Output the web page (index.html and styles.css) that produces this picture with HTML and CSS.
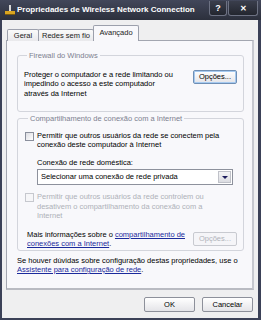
FILE: index.html
```html
<!DOCTYPE html>
<html lang="pt">
<head>
    <meta charset="UTF-8">
    <title>Propriedades de Wireless Network Connection</title>
    <link rel="stylesheet" href="styles.css">
</head>
<body>
    <div class="window">
        <div class="titlebar">
            <svg class="app-icon" width="12" height="10" viewBox="0 0 12 10">
                <rect x="5" y="0" width="2" height="7" fill="#d8d8d8"/>
                <rect x="1" y="6" width="10" height="3" fill="#d9a520"/>
                <rect x="1" y="9" width="10" height="1" fill="#7a5a10"/>
            </svg>
            <span class="title">Propriedades de Wireless Network Connection</span>
            <div class="caption-buttons">
                <button class="cap-btn help">?</button>
                <button class="cap-btn close">✕</button>
            </div>
        </div>

        <div class="client">
            <div class="tabs">
                <div class="tab">Geral</div>
                <div class="tab">Redes sem fio</div>
                <div class="tab active">Avançado</div>
            </div>

            <div class="page">
                <fieldset class="group firewall">
                    <legend>Firewall do Windows</legend>
                    <div class="row">
                        <p class="text">Proteger o computador e a rede limitando ou<br>impedindo o acesso a este computador<br>através da Internet</p>
                        <button class="btn focused">Opções...</button>
                    </div>
                </fieldset>

                <fieldset class="group sharing">
                    <legend>Compartilhamento de conexão com a Internet</legend>
                    <label class="check">
                        <span class="box"></span>
                        <span class="text">Permitir que outros usuários da rede se conectem pela<br>conexão deste computador à Internet</span>
                    </label>

                    <div class="home">
                        <div class="text">Conexão de rede doméstica:</div>
                        <div class="select">
                            <span class="value">Selecionar uma conexão de rede privada</span>
                            <span class="arrow"></span>
                        </div>
                    </div>

                    <label class="check disabled">
                        <span class="box"></span>
                        <span class="text">Permitir que outros usuários da rede controlem ou<br>desativem o compartilhamento da conexão com a<br>Internet</span>
                    </label>

                    <div class="row more">
                        <p class="text">Mais informações sobre o <a href="#">compartilhamento de<br>conexões com a Internet</a>.</p>
                        <button class="btn" disabled>Opções...</button>
                    </div>
                </fieldset>

                <p class="text wizard">Se houver dúvidas sobre configuração destas propriedades, use o<br><a href="#">Assistente para configuração de rede</a>.</p>
            </div>

            <div class="actions">
                <button class="btn wide">OK</button>
                <button class="btn wide">Cancelar</button>
            </div>
        </div>
    </div>
</body>
</html>
```

FILE: styles.css
```css
* {
    box-sizing: border-box;
}

body {
    margin: 0;
    background: #ffffff;
    font-family: 'Liberation Sans', Arial, sans-serif;
    font-size: 7.5px;
    line-height: 9.5px;
    color: #000000;
}

.window {
    width: 261px;
    height: 320px;
    display: flex;
    flex-direction: column;
    background: #3b4157;
    padding: 0 3px 2px 2px;
}

.titlebar {
    height: 20px;
    display: flex;
    align-items: center;
    background: linear-gradient(#42475a, #2c303c);
    margin: 0 -3px 0 -2px;
    padding: 0 3px 0 4px;
}

.app-icon {
    margin-right: 1px;
    flex-shrink: 0;
}

.title {
    color: #ffffff;
    font-weight: bold;
    font-size: 8px;
    white-space: nowrap;
    flex: 1;
}

.caption-buttons {
    display: flex;
    gap: 1px;
    align-self: flex-start;
    margin-top: 1px;
}

.cap-btn {
    height: 15px;
    padding: 0;
    border: 1px solid #6d7283;
    border-top: none;
    border-radius: 0 0 3px 3px;
    background: linear-gradient(#3a3e4c, #23262f);
    color: #ffffff;
    font-family: 'Liberation Sans', Arial, sans-serif;
    font-weight: bold;
    font-size: 9px;
    line-height: 13px;
}

.help {
    width: 18px;
}

.close {
    width: 30px;
    font-size: 8px;
}

.client {
    flex: 1;
    display: flex;
    flex-direction: column;
    background: #efeff0;
    padding: 5px 4px 0 4px;
}

.tabs {
    display: flex;
    align-items: flex-end;
    height: 16px;
    padding-left: 1px;
    margin-bottom: -1px;
    position: relative;
    z-index: 1;
}

.tab {
    height: 12px;
    padding: 0;
    border: 1px solid #9ca0ac;
    border-bottom: none;
    border-radius: 2px 2px 0 0;
    background: linear-gradient(#fafafa, #e9e9ec);
    line-height: 11px;
    text-align: center;
    white-space: nowrap;
    color: #222222;
    margin-right: -1px;
}

.tab:nth-child(1) {
    width: 32px;
}

.tab:nth-child(2) {
    width: 56px;
}

.tab.active {
    height: 16px;
    width: 46px;
    background: #f8f8fb;
    line-height: 13px;
}

.page {
    height: 250px;
    background: #f8f8fb;
    border: 1px solid #a3a6b0;
    border-right: 2px solid #c6c8cf;
    border-bottom: 2px solid #b9bbc2;
    padding: 0 8px 0 10px;
}

.group {
    margin: 0;
    padding: 0;
    border: 1px solid #d3d5dc;
    border-radius: 3px;
}

.group legend {
    margin-left: 3px;
    padding: 0 2px;
    color: #7d8190;
}

.text {
    margin: 0;
    white-space: nowrap;
}

.firewall {
    margin-top: 10px;
    padding: 9px 6px 13px 6px;
}

.row {
    display: flex;
    justify-content: space-between;
    align-items: flex-start;
}

.btn {
    width: 44px;
    height: 14px;
    padding: 0;
    border: 1px solid #8d909a;
    border-radius: 2px;
    background: linear-gradient(#ffffff, #e4e4e8);
    font-family: 'Liberation Sans', Arial, sans-serif;
    font-size: 7.5px;
    line-height: 12px;
    color: #000000;
}

.btn.focused {
    box-shadow: inset 0 0 0 1px #a6caf0;
    border-color: #6f8fb5;
}

.btn:disabled {
    color: #b0b3ba;
    border-color: #c8cad0;
    background: #f5f5f8;
}

.sharing {
    margin-top: 2px;
    padding: 7px 6px 1px 7px;
}

.check {
    display: flex;
    align-items: flex-start;
}

.box {
    width: 9px;
    height: 9px;
    margin-top: 1px;
    margin-right: 3px;
    border: 1px solid #8a8f9c;
    background: linear-gradient(135deg, #dcdde2, #ffffff);
    flex-shrink: 0;
}

.check.disabled {
    color: #aeb1b8;
    margin-top: 7px;
}

.check.disabled .box {
    border-color: #c6c8ce;
    background: #f6f6f8;
}

.home {
    padding-left: 12px;
    margin-top: 8px;
}

.select {
    display: flex;
    height: 16px;
    margin-top: 2px;
    margin-right: 4px;
    border: 1px solid #8d919c;
    background: #ffffff;
    padding: 1px;
}

.select .value {
    flex: 1;
    padding-left: 2px;
    line-height: 12px;
}

.select .arrow {
    width: 13px;
    background: linear-gradient(#f4f4f6, #dcdde2);
    border: 1px solid #c0c2c9;
    display: flex;
    align-items: center;
    justify-content: center;
}

.select .arrow::after {
    content: "";
    border-left: 3px solid transparent;
    border-right: 3px solid transparent;
    border-top: 3px solid #1c1c5c;
}

.more {
    margin-top: 9px;
    padding-left: 2px;
}

.more .btn {
    margin-top: 2px;
}

a {
    color: #1b2a9c;
}

.wizard {
    margin-top: 5px;
}

.actions {
    display: flex;
    justify-content: flex-end;
    gap: 7px;
    padding: 7px 1px 0 0;
}

.btn.wide {
    width: 51px;
    height: 15px;
    line-height: 13px;
}
```
